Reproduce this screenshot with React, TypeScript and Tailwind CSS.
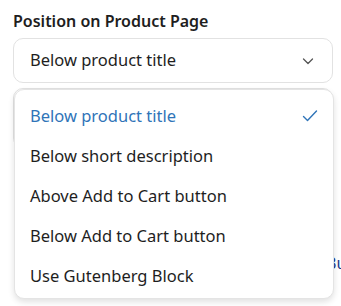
import React from "react";

const items = [
  "Below product title",
  "Below short description",
  "Above Add to Cart button",
  "Below Add to Cart button",
  "Use Gutenberg Block",
];

export default function App() {
  return (
    <div
      className="relative w-[341px] h-[306px] overflow-hidden bg-white text-[#1e1e1e]"
      style={{ fontFamily: '"Noto Sans", "Open Sans", sans-serif' }}
    >
      <div className="pl-[13px] pr-[8px] pt-[10px]">
        <div className="text-[16px] font-semibold leading-[22px] text-[#1e1e1e]">
          Position on Product Page
        </div>
        <div className="mt-[6px] h-[45px] rounded-[10px] border border-[#e2e2e2] flex items-center justify-between pl-[16px] pr-[17px]">
          <span className="text-[16.5px] text-[#1e1e1e]">Below product title</span>
          <svg width="14" height="14" viewBox="0 0 14 14" fill="none">
            <path d="M2.5 5 L7 9.5 L11.5 5" stroke="#555" strokeWidth="1.3" strokeLinecap="round" strokeLinejoin="round" />
          </svg>
        </div>
        <div className="mt-[5px] h-[60px] rounded-[10px] border border-[#e2e2e2] flex items-start">
          <div className="mt-[20px] w-full border-t border-[#e2e2e2]" />
        </div>
      </div>

      <div className="absolute left-[326px] top-[252px] text-[16px] text-[#1e3a8a] leading-[22px]">Bu</div>

      <div className="absolute left-[14px] top-[89px] w-[320px] rounded-[10px] border border-[#e4e4e4] bg-white shadow-[0_3px_6px_rgba(0,0,0,0.12)] pt-[6px] pb-[2px]">
        {items.map((t, i) => (
          <div key={t} className="h-[40px] flex items-center justify-between pl-[15px] pr-[15px]">
            <span className={`text-[16.5px] ${i === 0 ? "text-[#2f74b8]" : "text-[#1e1e1e]"}`}>{t}</span>
            {i === 0 && (
              <svg width="16" height="14" viewBox="0 0 16 14" fill="none">
                <path d="M1.5 7.5 L5.5 11.5 L14.5 2" stroke="#2f74b8" strokeWidth="1.4" strokeLinecap="round" strokeLinejoin="round" />
              </svg>
            )}
          </div>
        ))}
      </div>
    </div>
  );
}
